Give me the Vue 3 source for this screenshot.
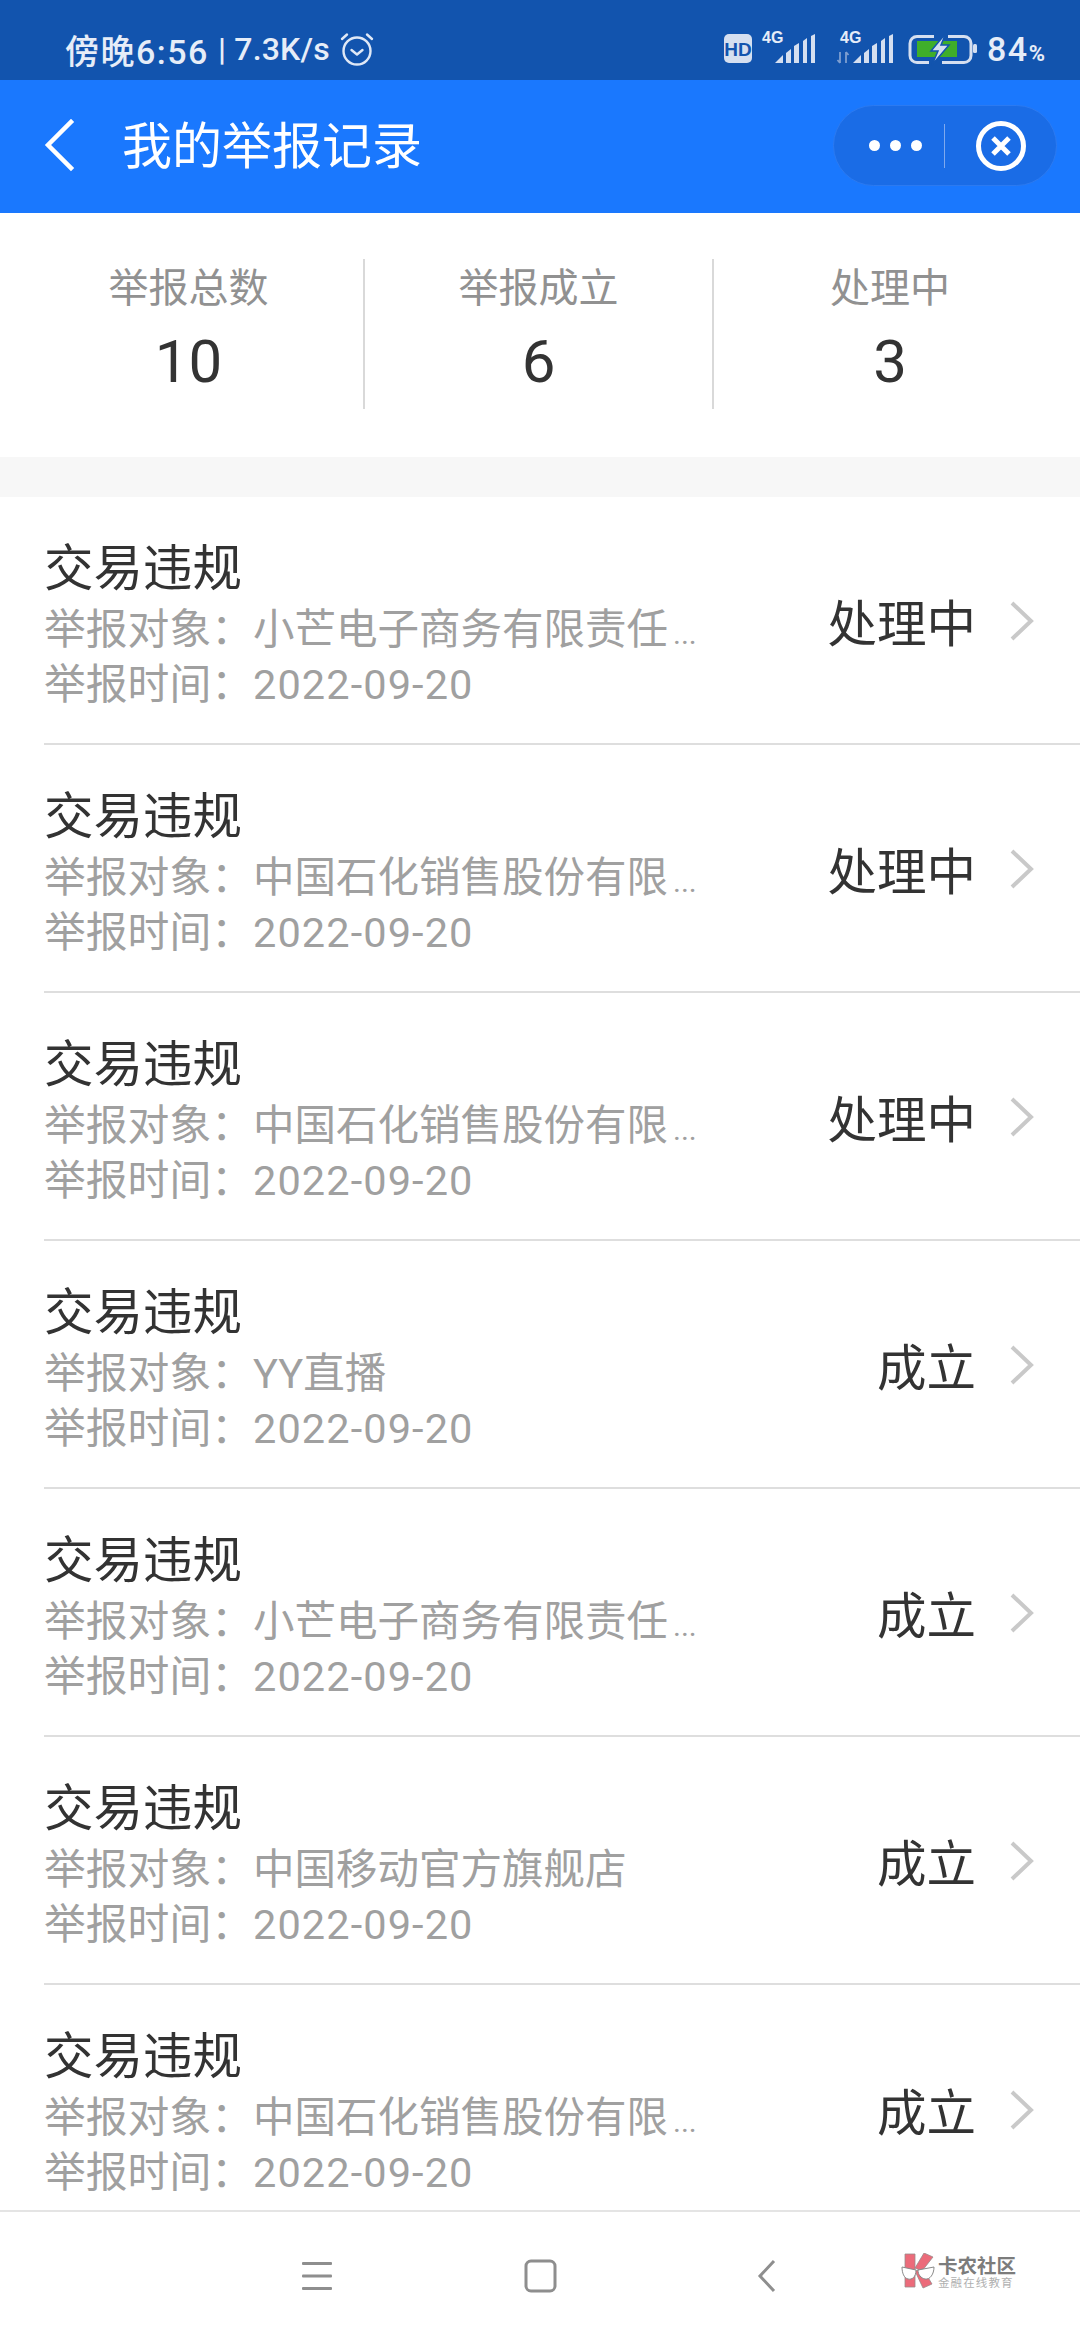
<script setup>
const stats = [
  { label: '举报总数', value: '10' },
  { label: '举报成立', value: '6' },
  { label: '处理中', value: '3' },
]
const A = '小芒电子商务有限责任'
const B = '中国石化销售股份有限'
const rows = [
  { target: A, cut: true, status: '处理中' },
  { target: B, cut: true, status: '处理中' },
  { target: B, cut: true, status: '处理中' },
  { target: 'YY直播', cut: false, status: '成立' },
  { target: A, cut: true, status: '成立' },
  { target: '中国移动官方旗舰店', cut: false, status: '成立' },
  { target: B, cut: true, status: '成立' },
]
</script>

<template>
  <div class="page">
    <div class="status">
      <div class="status-left">
        <span class="clock">傍晚6:56</span>
        <span class="speed">| 7.3K/s</span>
        <svg class="alarm" width="34" height="36" viewBox="0 0 34 36" fill="none" stroke="#dfe8f6" stroke-width="2.400" stroke-linecap="round" stroke-linejoin="round">
          <circle cx="17" cy="20" r="13.500" />
          <path d="M11.500 19l5.500 4.500 5.500-4.500" />
          <path d="M2 8l5-4.500M32 8l-5-4.500" />
        </svg>
      </div>
      <div class="status-right">
        <svg width="253" height="44" viewBox="0 -4 253 44">
          <rect x="0" y="3" width="28" height="29" rx="5" fill="#d5dff0" />
          <text x="14" y="25" class="hd">HD</text>
          <text x="38" y="12" class="g4">4G</text>
          <g fill="#d5dff0">
            <polygon points="51,32 59,24 59,32" />
            <polygon points="62,32 62,22 67,18 67,32" />
            <polygon points="70,32 70,15 75,12 75,32" />
            <polygon points="79,32 79,10 83,7 83,32" />
            <polygon points="87,32 87,5 91,3 91,32" />
          </g>
          <text x="116" y="12" class="g4">4G</text>
          <g fill="#d5dff0" transform="translate(78)">
            <polygon points="51,32 59,24 59,32" />
            <polygon points="62,32 62,22 67,18 67,32" />
            <polygon points="70,32 70,15 75,12 75,32" />
            <polygon points="79,32 79,10 83,7 83,32" />
            <polygon points="87,32 87,5 91,3 91,32" />
          </g>
          <path d="M116 21v11M113.500 29l2.500 3M122 32V21M122 21l2.500 3" stroke="#7f9fd0" stroke-width="1.800" fill="none" />
          <rect x="193" y="10" width="40" height="16" fill="#3fae2a" />
          <path d="M210 5.500H193a7 7 0 0 0-7 7v12a7 7 0 0 0 7 7H205M224 5.500H240a7 7 0 0 1 7 7v12a7 7 0 0 1-7 7H218" fill="none" stroke="#d5dff0" stroke-width="3" />
          <rect x="249" y="13" width="4" height="9" rx="1.500" fill="#d5dff0" />
          <path d="M222 2L207 20h7l-6 14 17-20h-8l5-12z" fill="#d5dff0" stroke="#1254ae" stroke-width="1.500" />
        </svg>
        <span class="pct">84<small>%</small></span>
      </div>
    </div>

    <header class="bar">
      <svg class="back" width="34" height="54" viewBox="0 0 34 54" fill="none" stroke="#fff" stroke-width="4.500" stroke-linecap="square">
        <path d="M29 4L6 27l23 23" />
      </svg>
      <h1>我的举报记录</h1>
      <div class="pill">
        <div class="dots"><i></i><i></i><i></i></div>
        <div class="pill-line"></div>
        <svg width="50" height="50" viewBox="0 0 50 50" fill="none" stroke="#fff">
          <circle cx="25" cy="25" r="22.500" stroke-width="5" />
          <path d="M17 17l16 16M33 17L17 33" stroke-width="5" />
        </svg>
      </div>
    </header>

    <section class="stats">
      <div v-for="s in stats" :key="s.label" class="stat">
        <div class="stat-label">{{ s.label }}</div>
        <div class="stat-value">{{ s.value }}</div>
      </div>
    </section>

    <main class="list">
      <div v-for="(r, i) in rows" :key="i" class="row">
        <div class="row-body">
          <div class="row-title">交易违规</div>
          <div class="row-sub"><span class="k">举报对象：</span><span>{{ r.target }}</span><span v-if="r.cut" class="cut">...</span></div>
          <div class="row-sub"><span class="k">举报时间：</span><span class="date">2022-09-20</span></div>
        </div>
        <div class="row-status">{{ r.status }}</div>
        <svg class="chev" width="28" height="42" viewBox="0 0 28 42" fill="none" stroke="#c9c9c9" stroke-width="4">
          <path d="M4 3l19 18L4 39" />
        </svg>
      </div>
    </main>

    <footer class="nav">
      <svg class="n1" width="34" height="30" viewBox="0 0 34 30" fill="#8e8e8e">
        <rect x="2" y="1" width="30" height="3" rx="1" />
        <rect x="2" y="13.500" width="30" height="3" rx="1" />
        <rect x="2" y="26" width="30" height="3" rx="1" />
      </svg>
      <svg class="n2" width="34" height="34" viewBox="0 0 34 34" fill="none" stroke="#8e8e8e" stroke-width="3">
        <rect x="2" y="2" width="29" height="30" rx="5" />
      </svg>
      <svg class="n3" width="22" height="36" viewBox="0 0 22 36" fill="none" stroke="#8e8e8e" stroke-width="3">
        <path d="M18 3L4 18l14 15" />
      </svg>
      <div class="logo">
        <svg width="36" height="36" viewBox="0 0 36 36">
          <path d="M5 1h10v33H5zM15 15L24 0l9 4-11 14zM15 18l8-2 9 15-9 4z" fill="#ec6b7a" stroke="#9a8a8c" stroke-width="0.800" />
          <path d="M2 14l14 3c0 7-4 10-8 9-4-1-6-6-6-12zM18 17l16-3c0 7-4 13-9 12-4-1-7-4-7-9z" fill="#fff" stroke="#8a8a8a" stroke-width="1" />
        </svg>
        <div class="logo-text">
          <div class="l1">卡农社区</div>
          <div class="l2">金融在线教育</div>
        </div>
      </div>
    </footer>
  </div>
</template>

<style>
html, body { margin: 0; background: #fff; }
</style>

<style scoped>
.page {
  width: 1080px;
  height: 2340px;
  display: flex;
  flex-direction: column;
  overflow: hidden;
  background: #fff;
  font-family: "Noto Sans CJK SC", "Noto Sans", sans-serif;
}
.status {
  height: 80px;
  flex: none;
  box-sizing: border-box;
  background: #1254ae;
  display: flex;
  align-items: center;
  justify-content: space-between;
  padding: 18px 34px 0 65px;
  color: #e6edf8;
}
.status-left {
  display: flex;
  align-items: center;
  font-size: 34px;
  font-weight: 500;
  font-family: "Roboto", "Noto Sans CJK SC", sans-serif;
}
.clock { letter-spacing: 1.500px; }
.speed { font-size: 32px; margin-left: 9px; letter-spacing: 0.2px; }
.alarm { margin-left: 10px; }
.status-right { display: flex; align-items: center; gap: 10px; }
.hd { font: 700 19px "Liberation Sans", sans-serif; fill: #1254ae; text-anchor: middle; }
.g4 { font: 700 16px "Liberation Sans", sans-serif; fill: #e6edf8; }
.pct { font: 500 34px "Roboto", sans-serif; letter-spacing: 1.500px; color: #e6edf8; width: 59px; white-space: nowrap; }
.pct small { font-size: 22px; font-weight: 700; letter-spacing: 0; }

.bar {
  height: 133px;
  flex: none;
  background: #1a78fe;
  display: flex;
  align-items: center;
  padding: 0 23px 0 42px;
  color: #fff;
}
.back { flex: none; margin-bottom: 3px; }
.bar h1 {
  margin: 0 0 10px 46px;
  font-size: 50px;
  font-weight: 400;
  flex: 1;
}
.pill {
  width: 224px;
  height: 81px;
  margin-top: -2px;
  box-sizing: border-box;
  border-radius: 41px;
  background: #1a6ce6;
  border: 1px solid #2c7af0;
  display: flex;
  align-items: center;
  padding-left: 35px;
}
.dots { display: flex; gap: 10px; }
.dots i { width: 11px; height: 11px; border-radius: 50%; background: #fff; display: block; }
.pill-line { width: 1px; height: 44px; background: #7fa9ee; margin: 0 31px 0 22px; }

.stats {
  height: 284px;
  flex: none;
  box-sizing: border-box;
  display: grid;
  grid-template-columns: 365px 349px 1fr;
  padding-top: 46px;
  align-content: start;
  border-bottom: 40px solid #f7f7f7;
}
.stat {
  height: 150px;
  text-align: center;
  box-sizing: border-box;
  border-right: 2px solid #d9d9d9;
}
.stat:first-child { padding-left: 14px; }
.stat:last-child { border-right: 0; padding-right: 14px; }
.stat-label { font-size: 40px; line-height: 58px; margin-top: -3px; color: #919191; font-weight: 400; }
.stat-value { font-size: 60px; line-height: 84px; margin-top: 6px; color: #333; font-family: "Roboto", sans-serif; }

.list { flex: 1; min-height: 0; overflow: hidden; }
.row {
  height: 248px;
  box-sizing: border-box;
  margin-left: 44px;
  padding-right: 44px;
  border-bottom: 2px solid #dedede;
  display: flex;
  align-items: center;
}
.row:last-child { border-bottom: 0; }
.row-body { flex: none; width: 660px; align-self: flex-start; padding-top: 35px; }
.row-title { font-size: 49.500px; line-height: 66px; color: #333; margin-bottom: 4px; font-weight: 400; }
.row-sub {
  display: flex;
  align-items: baseline;
  height: 55px;
  font-size: 41.500px;
  line-height: 55px;
  color: #a0a0a0;
  font-weight: 400;
  white-space: nowrap;
  font-family: "Roboto", "Noto Sans CJK SC", sans-serif;
}
.k { flex: none; width: 209px; font-size: 41.800px; }
.date { letter-spacing: 1.100px; }
.cut { font-size: 30px; margin-left: 5px; }
.row-status {
  flex: 1;
  text-align: right;
  font-size: 49.500px;
  color: #333;
  font-weight: 400;
  padding-right: 32px;
}
.chev { flex: none; margin-top: 2px; }

.nav {
  height: 130px;
  flex: none;
  box-sizing: border-box;
  border-top: 2px solid #e4e4e4;
  display: flex;
  align-items: center;
  padding-left: 300px;
}
.n2 { margin-left: 190px; }
.n3 { margin-left: 198px; }
.logo { display: flex; align-items: center; gap: 2px; margin: -10px 0 0 122px; }
.logo-text { width: 80px; }
.l1 { font-size: 19.500px; line-height: 21px; font-weight: 700; color: #7c7c7c; white-space: nowrap; }
.l2 { font-size: 11.500px; line-height: 14px; letter-spacing: 1.100px; color: #b0b0b0; white-space: nowrap; }
</style>
